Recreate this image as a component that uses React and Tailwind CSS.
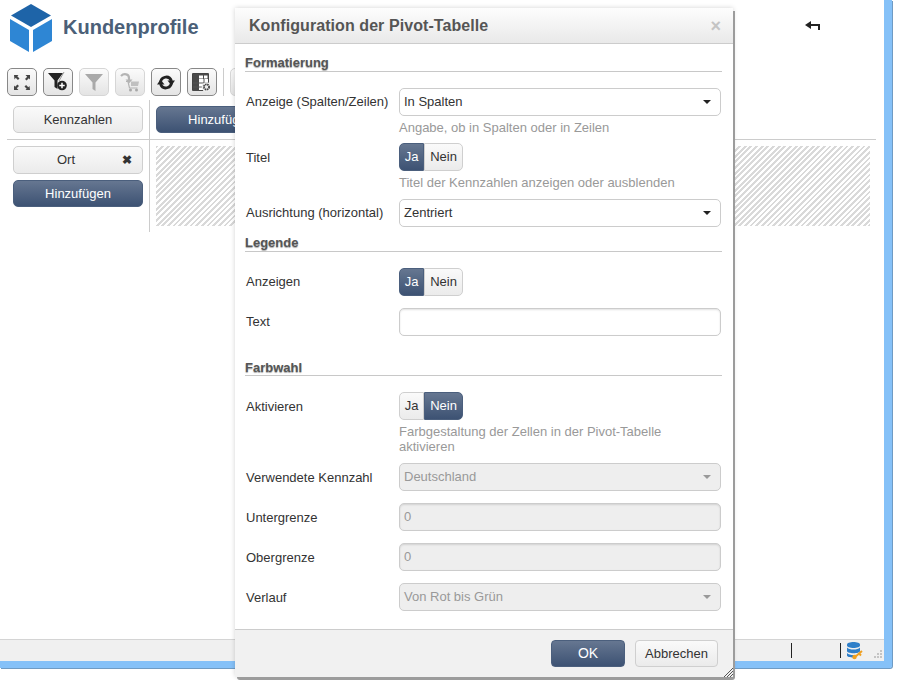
const FONT = "font-['Liberation_Sans',Arial,sans-serif]";
const PRIMARY = "bg-gradient-to-b from-[#667791] to-[#3d5273] text-white border border-[#4b5f7d]";
const LIGHT = "bg-gradient-to-b from-[#fafafa] to-[#ebebeb] text-[#333] border border-[#cfcfcf]";

function ExpandIcon() {
  return (
    <svg width="16" height="15" viewBox="0 0 16 15" fill="#444">
      <path d="M0 0h4.500L3.300 1.200 5.500 3.400 3.900 5 1.700 2.800.500 4.500zM16 0v4.500l-1.200-1.200-2.200 2.200L11 3.900l2.200-2.200L11.500 0zM0 15v-4.500l1.200 1.200 2.200-2.200L5 11.100l-2.200 2.200L4.500 15zM16 15h-4.500l1.200-1.200-2.200-2.200 1.600-1.600 2.200 2.200 1.200-1.200z" />
    </svg>
  );
}

function FilterAddIcon() {
  return (
    <svg width="20" height="20" viewBox="0 0 20 20">
      <path d="M0 1h15L9.500 8.500V17l-3-2V8.500z" fill="#222" />
      <path d="M16 0 11 9" stroke="#999" strokeWidth="1" />
      <circle cx="14" cy="13.500" r="4.800" fill="#222" />
      <path d="M14 10.800v5.400M11.300 13.500h5.400" stroke="#fff" strokeWidth="1.500" />
    </svg>
  );
}

function FilterIcon() {
  return (
    <svg width="18" height="18" viewBox="0 0 18 18">
      <path d="M0 1h18L10.500 9.500V18l-3-2V9.500z" fill="#a9a9a9" />
    </svg>
  );
}

function CartIcon() {
  return (
    <svg width="20" height="20" viewBox="0 0 20 20" fill="none">
      <path d="M1 4c3-3 8-2 8 2v2" stroke="#b4b4b4" strokeWidth="2.200" />
      <path d="M5.500 7.500 9 11.500l3.500-4z" fill="#b4b4b4" />
      <path d="M6 9.500h2l1.500 6.500h8" stroke="#b4b4b4" strokeWidth="1.200" />
      <path d="M11 9.500h8l-1 4.500h-7z" fill="#c0c0c0" />
      <circle cx="10.500" cy="18" r="1.500" fill="#a8a8a8" />
      <circle cx="16.500" cy="18" r="1.500" fill="#a8a8a8" />
    </svg>
  );
}

function RefreshIcon() {
  return (
    <svg width="18" height="17" viewBox="0 0 18 17" fill="none">
      <path d="M3.500 10C3 2.500 12 .5 14.500 7" stroke="#222" strokeWidth="2.800" />
      <path d="M10.500 6.500H18L14.500 11.500z" fill="#222" />
      <path d="M14.500 7C15 14.500 6 16.500 3.500 10" stroke="#222" strokeWidth="2.800" />
      <path d="M0 10.500H7.500L3.500 5.500z" fill="#222" />
    </svg>
  );
}

function TableGearIcon() {
  return (
    <svg width="20" height="19" viewBox="0 0 20 19">
      <path d="M.5.500h16v17H.5z" fill="#fff" stroke="#444" />
      <path d="M1 1h15v5H7v12H1z" fill="#4a4a4a" />
      <path d="M7 2.500h4v3H7zM12 2.500h3.500v3H12z" fill="#fff" />
      <path d="M7 10h9M7 14h5M12 6v8M1 10h6M1 14h6" stroke="#555" strokeWidth="1" />
      <circle cx="14.500" cy="14" r="4.800" fill="#ececec" />
      <circle cx="14.500" cy="14" r="2.600" fill="none" stroke="#444" strokeWidth="1.800" strokeDasharray="1.500 0.600" />
    </svg>
  );
}

function ToolButton({ disabled, children }) {
  return (
    <button
      type="button"
      className={`flex h-7 w-[30px] items-center justify-center rounded-[5px] border bg-gradient-to-b from-[#fbfbfb] to-[#e4e4e4] ${
        disabled ? "border-[#d6d6d6]" : "border-[#888]"
      }`}
    >
      {children}
    </button>
  );
}

function Logo() {
  return (
    <svg width="42" height="48" viewBox="0 0 42 48">
      <path d="M21 0 41 11.500 21 23 1 11.500z" fill="#1e64a8" />
      <path d="M0 15 19 26v22L0 37z" fill="#2e86d4" />
      <path d="M42 15 23 26v22l19-11z" fill="#2e86d4" />
    </svg>
  );
}

function DbKeyIcon() {
  return (
    <svg width="16" height="18" viewBox="0 0 16 18">
      <path d="M0 2.500C0 1 3 0 6.500 0S13 1 13 2.500v1C13 5 10 6 6.500 6S0 5 0 3.500z" fill="#2f7fc9" />
      <path d="M0 5.500C1.500 7 3.500 7.500 6.500 7.500S11.500 7 13 5.500V9c0 1.300-3 2.300-6.500 2.300S0 10.300 0 9z" fill="#2f7fc9" />
      <path d="M0 11c1.500 1.500 3.500 2 6.500 2 .8 0 1.500 0 2.300-.2L7 15.500h-.5C3 15.500 0 14.700 0 13.500z" fill="#2f7fc9" />
      <circle cx="7.500" cy="15" r="2.200" fill="#f0a020" />
      <path d="m8 15 7-6M12 11.500l2 2" stroke="#f0a020" strokeWidth="2" />
    </svg>
  );
}

function StatusGrip() {
  return (
    <svg width="9" height="9" viewBox="0 0 9 9" fill="#c4c4c4">
      <path d="M7 0h2v2H7zM4 3h2v2H4zM7 3h2v2H7zM1 6h2v2H1zM4 6h2v2H4zM7 6h2v2H7z" />
    </svg>
  );
}

function ResizeGrip() {
  return (
    <svg width="9" height="9" viewBox="0 0 9 9" stroke="#555" strokeWidth="1">
      <path d="M0 9 9 0M3 9l6-6M6 9l3-3" />
    </svg>
  );
}

function Section({ title, className, headClass = "h-[16px]", children }) {
  return (
    <section className={className}>
      <h3
        className={`ml-[10px] mr-[11px] border-b border-[#c8c8c8] text-[13px] leading-[13px] font-bold text-[#555] [text-shadow:0_1px_1px_#aaa] ${headClass}`}
      >
        {title}
      </h3>
      {children}
    </section>
  );
}

function Row({ label, className, labelClass = "", children }) {
  return (
    <div className={`flex items-start ${className}`}>
      <label className={`h-7 w-[164px] shrink-0 pl-[11px] text-[13px] leading-[28px] text-[#333] ${labelClass}`}>
        {label}
      </label>
      <div className="w-[322px]">{children}</div>
    </div>
  );
}

function Help({ children }) {
  return <p className="mt-[4px] w-[290px] text-[13px] leading-[15px] text-[#999]">{children}</p>;
}

function Select({ value, disabled }) {
  return (
    <div
      className={`flex h-7 items-center justify-between rounded-[5px] border border-[#ccc] pr-[9px] pl-[4px] text-[13px] ${
        disabled ? "bg-[#eee] text-[#999]" : "bg-white text-[#333]"
      }`}
    >
      <span>{value}</span>
      <span
        className={`h-0 w-0 border-x-[4px] border-t-[4px] border-x-transparent ${
          disabled ? "border-t-[#999]" : "border-t-[#222]"
        }`}
      />
    </div>
  );
}

function Input({ value, disabled }) {
  return (
    <div
      className={`h-7 rounded-[5px] border border-[#ccc] px-[4px] text-[13px] leading-[26px] shadow-[inset_0_1px_2px_rgba(0,0,0,0.12)] ${
        disabled ? "bg-[#eee] text-[#999]" : "bg-white"
      }`}
    >
      {value}
    </div>
  );
}

function Toggle({ on }) {
  return (
    <div className="flex h-7 w-16 text-[13px]">
      <span
        className={`flex w-[25px] items-center justify-center rounded-l-[5px] ${on ? PRIMARY : LIGHT}`}
      >
        Ja
      </span>
      <span
        className={`flex w-[39px] items-center justify-center rounded-r-[5px] ${on ? LIGHT : PRIMARY}`}
      >
        Nein
      </span>
    </div>
  );
}

function Dialog() {
  return (
    <div className="absolute top-[8px] left-[235px] flex h-[669px] w-[498px] flex-col rounded-b-[3px] bg-white shadow-[2px_3px_0_#9c9c9c,0_0_5px_rgba(0,0,0,0.18)]">
      <div className="flex h-[36px] items-center justify-between border-b border-[#ccc] bg-gradient-to-b from-[#fdfdfd] to-[#e9e9e9] pr-[12px] pl-[14px]">
        <span className="text-[16px] font-bold tracking-[0.07px] text-[#555]">Konfiguration der Pivot-Tabelle</span>
        <span className="text-[18px] leading-none font-bold text-[#c4c4c4]">×</span>
      </div>
      <div className="flex-1">
        <Section title="Formatierung" className="pt-[12px]">
          <Row label="Anzeige (Spalten/Zeilen)" className="mt-[16px]">
            <Select value="In Spalten" />
            <Help>Angabe, ob in Spalten oder in Zeilen</Help>
          </Row>
          <Row label="Titel" className="mt-[8px]" labelClass="pt-px">
            <Toggle on />
            <Help>Titel der Kennzahlen anzeigen oder ausblenden</Help>
          </Row>
          <Row label="Ausrichtung (horizontal)" className="mt-[9px]">
            <Select value="Zentriert" />
          </Row>
        </Section>
        <Section title="Legende" className="pt-[9px]">
          <Row label="Anzeigen" className="mt-[16px]">
            <Toggle on />
          </Row>
          <Row label="Text" className="mt-[12px]">
            <Input />
          </Row>
        </Section>
        <Section title="Farbwahl" className="pt-[25px]" headClass="h-[15px]">
          <Row label="Aktivieren" className="mt-[16px]" labelClass="pt-px">
            <Toggle />
            <Help>Farbgestaltung der Zellen in der Pivot-Tabelle aktivieren</Help>
          </Row>
          <Row label="Verwendete Kennzahl" className="mt-[9px]" labelClass="pt-px">
            <Select value="Deutschland" disabled />
          </Row>
          <Row label="Untergrenze" className="mt-[12px]" labelClass="pt-px">
            <Input value="0" disabled />
          </Row>
          <Row label="Obergrenze" className="mt-[12px]" labelClass="pt-px">
            <Input value="0" disabled />
          </Row>
          <Row label="Verlauf" className="mt-[12px]" labelClass="pt-px">
            <Select value="Von Rot bis Grün" disabled />
          </Row>
        </Section>
      </div>
      <div className="relative flex h-[48px] items-start justify-end gap-[10px] border-t border-[#ccc] bg-[#f1f1f1] pt-[10px] pr-[15px]">
        <button type="button" className={`h-[27px] w-[74px] rounded-[4px] text-[14px] ${PRIMARY}`}>
          OK
        </button>
        <button type="button" className={`h-[27px] w-[83px] rounded-[4px] text-[13px] ${LIGHT}`}>
          Abbrechen
        </button>
        <span className="absolute right-0 bottom-0 flex">
          <ResizeGrip />
        </span>
      </div>
    </div>
  );
}

export default function App() {
  return (
    <div className={`relative h-[680px] w-[909px] overflow-hidden bg-white ${FONT}`}>
      <div className="flex h-[668px] w-[892px] flex-col rounded-br-[3px] border-r-[8px] border-b-[7px] border-r-[#85c1f8] border-b-[#85c1f8] shadow-[1px_1px_0_#6f9bc4]">
        <header className="flex h-[60px] shrink-0 items-start">
          <div className="mt-[4px] ml-[10px]">
            <Logo />
          </div>
          <h1 className="mt-[14px] ml-[11px] text-[20px] leading-[27px] font-bold text-[#4b6078]">Kundenprofile</h1>
          <svg className="mt-[20px] ml-[606px]" width="15" height="11" viewBox="0 0 15 11" fill="#222">
            <path d="M0 5 6 1v3h9v6h-2V6H6v3z" />
          </svg>
        </header>

        <div className="mt-[8px] flex h-7 shrink-0 items-center gap-[6px] pl-[7px]">
          <ToolButton>
            <ExpandIcon />
          </ToolButton>
          <ToolButton>
            <FilterAddIcon />
          </ToolButton>
          <ToolButton disabled>
            <FilterIcon />
          </ToolButton>
          <ToolButton disabled>
            <CartIcon />
          </ToolButton>
          <ToolButton>
            <RefreshIcon />
          </ToolButton>
          <ToolButton>
            <TableGearIcon />
          </ToolButton>
          <span className="h-7 w-px bg-[#ccc]" />
          <ToolButton disabled />
        </div>

        <div className="mt-[4px] ml-[7px] grid w-[869px] grid-cols-[143px_1fr] grid-rows-[40px_92px] text-[13px]">
          <div className="border-r border-b border-[#ccc] pt-[6px] pl-[6px]">
            <button type="button" className={`h-[27px] w-[130px] rounded-[5px] ${LIGHT}`}>
              Kennzahlen
            </button>
          </div>
          <div className="border-b border-[#ccc] pt-[6px] pl-[6px]">
            <button type="button" className={`h-[27px] w-[130px] rounded-[5px] ${PRIMARY}`}>
              Hinzufügen
            </button>
          </div>
          <div className="flex flex-col gap-[6px] border-r border-[#ccc] pt-[6px] pl-[6px]">
            <div className={`relative flex h-[28px] w-[130px] items-center rounded-[5px] pl-[43px] ${LIGHT}`}>
              Ort
              <span className="absolute right-[10px] text-[12px] font-bold">✖</span>
            </div>
            <button type="button" className={`h-[27px] w-[130px] rounded-[5px] ${PRIMARY}`}>
              Hinzufügen
            </button>
          </div>
          <div className="pt-[6px] pr-[6px] pl-[6px]">
            <div className="h-[80px] bg-[repeating-linear-gradient(135deg,#d9d9d9_0,#d9d9d9_2px,#fff_2px,#fff_4px)]" />
          </div>
        </div>

        <div className="flex-1" />

        <footer className="relative flex h-[22px] shrink-0 items-center border-t border-[#d4d4d4] bg-[#f0f0f0]">
          <span className="ml-[791px] h-[15px] w-px bg-[#222]" />
          <span className="ml-[48px] h-[15px] w-px bg-[#222]" />
          <span className="ml-[6px] flex">
            <DbKeyIcon />
          </span>
          <span className="absolute right-[2px] bottom-[2px] flex">
            <StatusGrip />
          </span>
        </footer>
      </div>
      <Dialog />
    </div>
  );
}
